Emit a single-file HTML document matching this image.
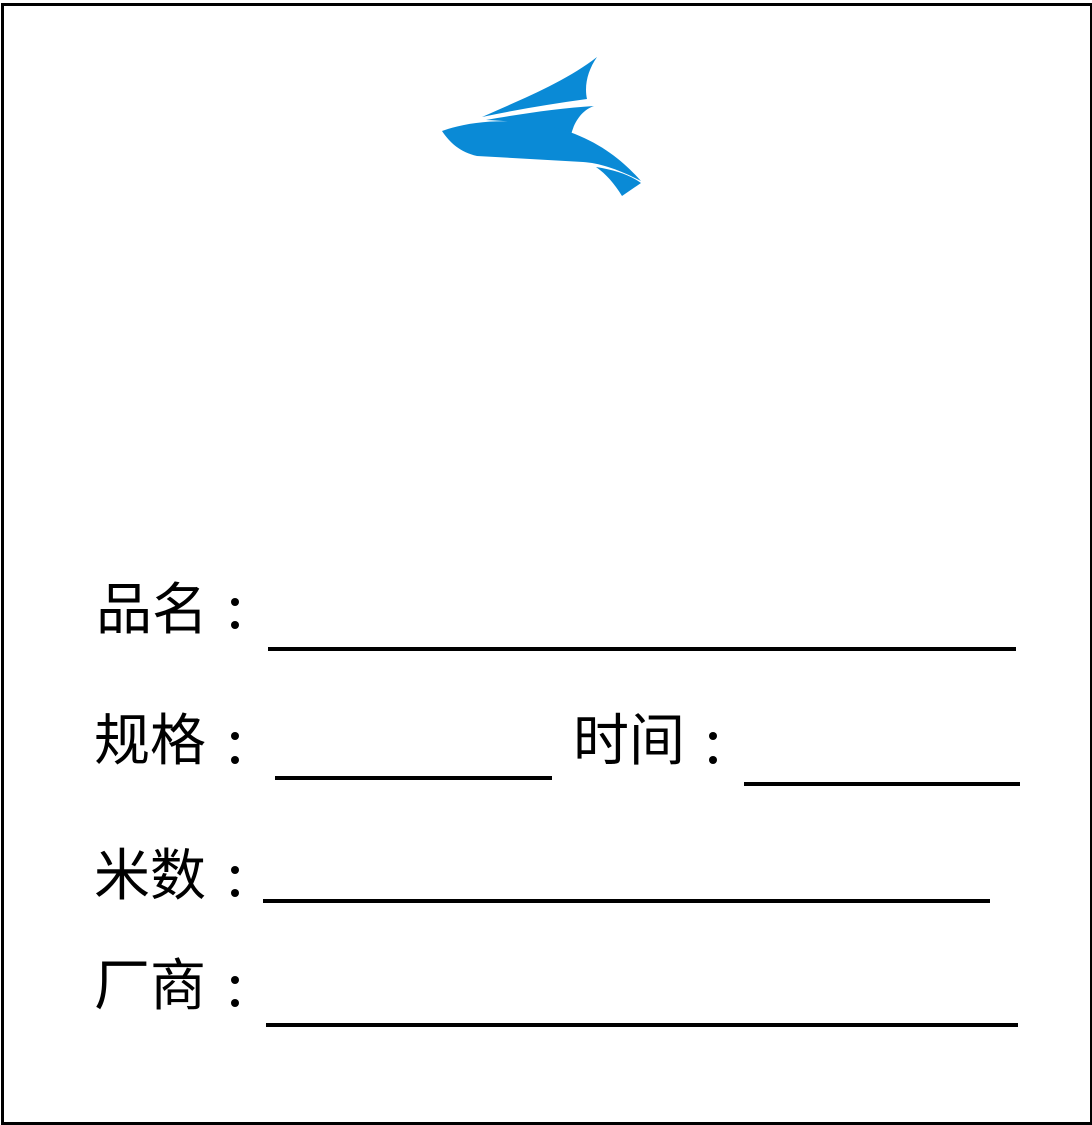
<!DOCTYPE html>
<html><head><meta charset="utf-8"><style>
html,body{margin:0;padding:0;background:#fff;}
body{width:1092px;height:1122px;position:relative;overflow:hidden;}
.frame{position:absolute;left:1px;top:3px;width:1086px;height:1116px;border:3px solid #000;}
.t{position:absolute;font-family:"Liberation Sans","Noto Sans CJK SC",sans-serif;font-size:56px;line-height:1;color:#000;white-space:nowrap;}
.c{position:absolute;width:8px;height:8px;border-radius:50%;background:#000;}
.l{position:absolute;height:4px;background:#000;}
</style></head><body>
<div class="frame"></div>
<svg style="position:absolute;left:0;top:0" width="1092" height="260">
<g fill="#0a8ad6">
<path d="M597,57 C588,70 584,85 587,99 C550,104 515,110 482,117 C520,100 565,82 597,57Z"/>
<path d="M486,120 C520,114 560,108 594,106 C582,110 574,122 571,135 C545,126 515,121 486,120Z"/>
<path d="M442,131 C480,117 535,118 575,134 C605,146 625,163 641,181 C620,170 600,163 583,162 L477,156 C460,152 450,143 442,131Z"/>
<path d="M596,167 C615,170 630,175 641,183 L622,196 C614,183 606,174 596,167Z"/>
</g></svg>

<div class="t" style="left:96px;top:582px">品名</div>
<div class="c" style="left:231px;top:598px"></div><div class="c" style="left:231px;top:621px"></div>
<div class="l" style="left:268px;top:647px;width:748px"></div>

<div class="t" style="left:94px;top:713px">规格</div>
<div class="c" style="left:231px;top:732px"></div><div class="c" style="left:231px;top:756px"></div>
<div class="l" style="left:275px;top:776px;width:277px"></div>

<div class="t" style="left:573px;top:713px">时间</div>
<div class="c" style="left:709px;top:732px"></div><div class="c" style="left:709px;top:756px"></div>
<div class="l" style="left:744px;top:782px;width:276px"></div>

<div class="t" style="left:94px;top:848px">米数</div>
<div class="c" style="left:231px;top:866px"></div><div class="c" style="left:231px;top:889px"></div>
<div class="l" style="left:263px;top:899px;width:727px"></div>

<div class="t" style="left:94px;top:958px">厂商</div>
<div class="c" style="left:231px;top:976px"></div><div class="c" style="left:231px;top:999px"></div>
<div class="l" style="left:266px;top:1023px;width:752px"></div>
</body></html>
